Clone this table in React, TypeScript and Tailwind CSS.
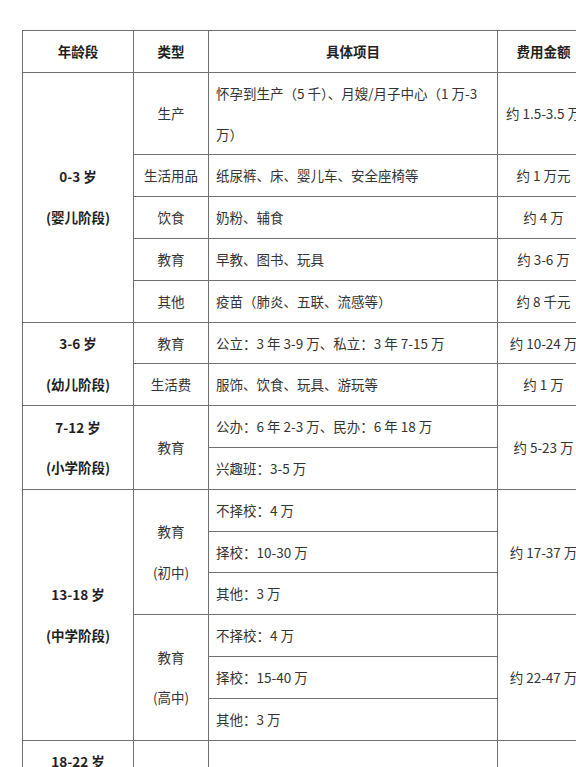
import React from "react";

type Item = { text: React.ReactNode };

const cell = "border border-[#6f6f6f] p-0 align-middle";
const center = `${cell} text-center`;
const left = `${cell} text-left pl-[7px] pr-1`;

export default function App() {
  return (
    <div
      className="w-[576px] h-[767px] overflow-hidden bg-white text-[#333] text-[13.5px] leading-[40.8px]"
      style={{ fontFamily: '"Noto Sans CJK SC", "Noto Sans", sans-serif' }}
    >
      <div className="pt-[30px] pl-[22px]">
        <table className="table-fixed border-collapse w-[567px]">
          <colgroup>
            <col className="w-[111px]" />
            <col className="w-[75px]" />
            <col className="w-[289px]" />
            <col className="w-[92px]" />
          </colgroup>
          <thead>
            <tr>
              <th className={`${center} font-bold text-[#1f1f1f]`}>年龄段</th>
              <th className={`${center} font-bold text-[#1f1f1f]`}>类型</th>
              <th className={`${center} font-bold text-[#1f1f1f]`}>具体项目</th>
              <th className={`${center} font-bold text-[#1f1f1f] whitespace-nowrap`}>费用金额</th>
            </tr>
          </thead>
          <tbody>
            {/* 0-3 岁 */}
            <tr>
              <td rowSpan={5} className={`${center} font-bold text-[#1f1f1f]`}>
                0-3 岁<br />(婴儿阶段)
              </td>
              <td className={center}>生产</td>
              <td className={left}>
                <span className="whitespace-nowrap">怀孕到生产（5 千）、月嫂/月子中心（1 万-3</span>
                <br />万）
              </td>
              <td className={`${center} whitespace-nowrap`}>约 1.5-3.5 万</td>
            </tr>
            <tr>
              <td className={`${center} whitespace-nowrap`}>生活用品</td>
              <td className={left}>纸尿裤、床、婴儿车、安全座椅等</td>
              <td className={`${center} whitespace-nowrap`}>约 1 万元</td>
            </tr>
            <tr>
              <td className={center}>饮食</td>
              <td className={left}>奶粉、辅食</td>
              <td className={`${center} whitespace-nowrap`}>约 4 万</td>
            </tr>
            <tr>
              <td className={center}>教育</td>
              <td className={left}>早教、图书、玩具</td>
              <td className={`${center} whitespace-nowrap`}>约 3-6 万</td>
            </tr>
            <tr>
              <td className={center}>其他</td>
              <td className={left}>疫苗（肺炎、五联、流感等）</td>
              <td className={`${center} whitespace-nowrap`}>约 8 千元</td>
            </tr>

            {/* 3-6 岁 */}
            <tr>
              <td rowSpan={2} className={`${center} font-bold text-[#1f1f1f]`}>
                3-6 岁<br />(幼儿阶段)
              </td>
              <td className={center}>教育</td>
              <td className={left}>公立：3 年 3-9 万、私立：3 年 7-15 万</td>
              <td className={`${center} whitespace-nowrap`}>约 10-24 万</td>
            </tr>
            <tr>
              <td className={center}>生活费</td>
              <td className={left}>服饰、饮食、玩具、游玩等</td>
              <td className={`${center} whitespace-nowrap`}>约 1 万</td>
            </tr>

            {/* 7-12 岁 */}
            <tr>
              <td rowSpan={2} className={`${center} font-bold text-[#1f1f1f]`}>
                7-12 岁<br />(小学阶段)
              </td>
              <td rowSpan={2} className={center}>教育</td>
              <td className={left}>公办：6 年 2-3 万、民办：6 年 18 万</td>
              <td rowSpan={2} className={`${center} whitespace-nowrap`}>约 5-23 万</td>
            </tr>
            <tr>
              <td className={left}>兴趣班：3-5 万</td>
            </tr>

            {/* 13-18 岁 */}
            <tr>
              <td rowSpan={6} className={`${center} font-bold text-[#1f1f1f]`}>
                13-18 岁<br />(中学阶段)
              </td>
              <td rowSpan={3} className={center}>
                教育<br />(初中)
              </td>
              <td className={left}>不择校：4 万</td>
              <td rowSpan={3} className={`${center} whitespace-nowrap`}>约 17-37 万</td>
            </tr>
            <tr>
              <td className={left}>择校：10-30 万</td>
            </tr>
            <tr>
              <td className={left}>其他：3 万</td>
            </tr>
            <tr>
              <td rowSpan={3} className={center}>
                教育<br />(高中)
              </td>
              <td className={left}>不择校：4 万</td>
              <td rowSpan={3} className={`${center} whitespace-nowrap`}>约 22-47 万</td>
            </tr>
            <tr>
              <td className={left}>择校：15-40 万</td>
            </tr>
            <tr>
              <td className={left}>其他：3 万</td>
            </tr>

            {/* 18-22 岁 */}
            <tr>
              <td rowSpan={2} className={`${center} font-bold text-[#1f1f1f] align-top`}>
                18-22 岁<br />(大学阶段)
              </td>
              <td rowSpan={2} className={center}>教育</td>
              <td rowSpan={2} className={left}>学费、住宿费、生活费等</td>
              <td rowSpan={2} className={`${center} whitespace-nowrap`}>约 10-20 万</td>
            </tr>
            <tr />
          </tbody>
        </table>
      </div>
    </div>
  );
}
